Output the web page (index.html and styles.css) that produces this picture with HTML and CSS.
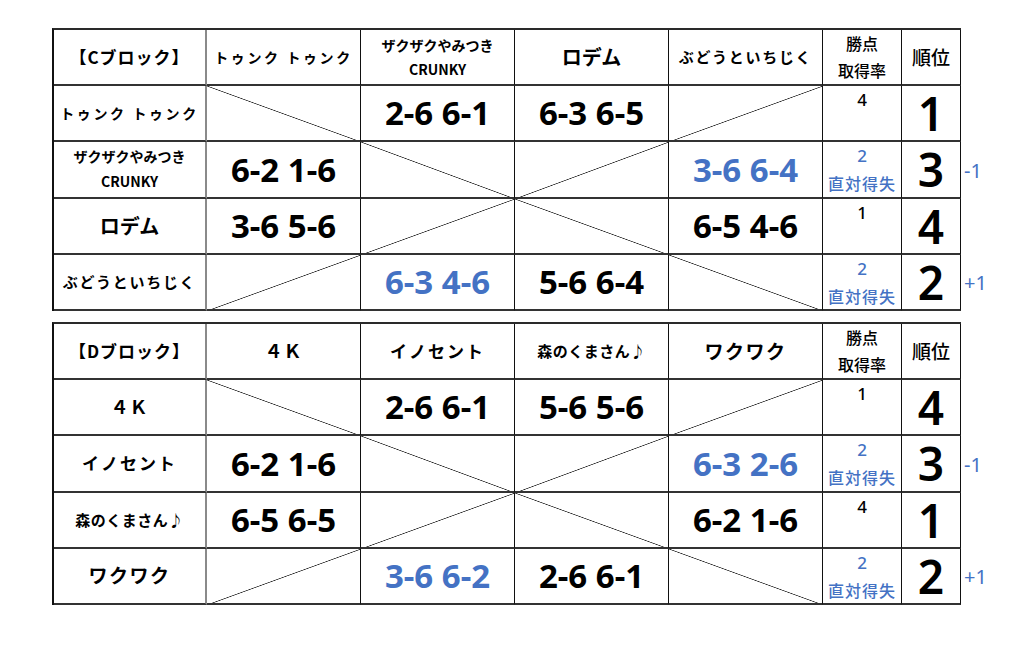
FILE: index.html
```html
<!DOCTYPE html>
<html lang="ja">
<head>
<meta charset="utf-8">
<title>ブロック対戦表</title>
<link rel="stylesheet" href="styles.css">
</head>
<body>
<main class="page">

  <section class="block">
    <div class="table">
      <div class="cell c1 name-blk">【Cブロック】</div>
      <div class="cell name-md">トゥンク トゥンク</div>
      <div class="cell name-2l"><span>ザクザクやみつき</span><span>CRUNKY</span></div>
      <div class="cell name-lg">ロデム</div>
      <div class="cell name-bd">ぶどうといちじく</div>
      <div class="cell head-2l"><span>勝点</span><span>取得率</span></div>
      <div class="cell head-rank">順位</div>

      <div class="cell c1 name-md">トゥンク トゥンク</div>
      <div class="cell diag-down"></div>
      <div class="cell score">2-6 6-1</div>
      <div class="cell score">6-3 6-5</div>
      <div class="cell diag-up"></div>
      <div class="cell pts"><span class="pt-num">4</span></div>
      <div class="cell rank">1</div>

      <div class="cell c1 name-2l row"><span>ザクザクやみつき</span><span>CRUNKY</span></div>
      <div class="cell score">6-2 1-6</div>
      <div class="cell diag-down"></div>
      <div class="cell diag-up"></div>
      <div class="cell score blue">3-6 6-4</div>
      <div class="cell pts blue"><span class="pt-num">2</span><span class="pt-note">直対得失</span></div>
      <div class="cell rank">3</div>

      <div class="cell c1 name-lg">ロデム</div>
      <div class="cell score">3-6 5-6</div>
      <div class="cell diag-up"></div>
      <div class="cell diag-down"></div>
      <div class="cell score">6-5 4-6</div>
      <div class="cell pts"><span class="pt-num">1</span></div>
      <div class="cell rank">4</div>

      <div class="cell c1 name-bd">ぶどうといちじく</div>
      <div class="cell diag-up"></div>
      <div class="cell score blue">6-3 4-6</div>
      <div class="cell score">5-6 6-4</div>
      <div class="cell diag-down"></div>
      <div class="cell pts blue"><span class="pt-num">2</span><span class="pt-note">直対得失</span></div>
      <div class="cell rank">2</div>
    </div>
    <div class="notes">
      <div class="note"></div>
      <div class="note"></div>
      <div class="note">-1</div>
      <div class="note"></div>
      <div class="note">+1</div>
    </div>
  </section>

  <section class="block">
    <div class="table">
      <div class="cell c1 name-blk">【Dブロック】</div>
      <div class="cell name-4k">４Ｋ</div>
      <div class="cell name-in">イノセント</div>
      <div class="cell name-mori">森のくまさん♪</div>
      <div class="cell name-wk">ワクワク</div>
      <div class="cell head-2l"><span>勝点</span><span>取得率</span></div>
      <div class="cell head-rank">順位</div>

      <div class="cell c1 name-4k">４Ｋ</div>
      <div class="cell diag-down"></div>
      <div class="cell score">2-6 6-1</div>
      <div class="cell score">5-6 5-6</div>
      <div class="cell diag-up"></div>
      <div class="cell pts"><span class="pt-num">1</span></div>
      <div class="cell rank">4</div>

      <div class="cell c1 name-in">イノセント</div>
      <div class="cell score">6-2 1-6</div>
      <div class="cell diag-down"></div>
      <div class="cell diag-up"></div>
      <div class="cell score blue">6-3 2-6</div>
      <div class="cell pts blue"><span class="pt-num">2</span><span class="pt-note">直対得失</span></div>
      <div class="cell rank">3</div>

      <div class="cell c1 name-mori">森のくまさん♪</div>
      <div class="cell score">6-5 6-5</div>
      <div class="cell diag-up"></div>
      <div class="cell diag-down"></div>
      <div class="cell score">6-2 1-6</div>
      <div class="cell pts"><span class="pt-num">4</span></div>
      <div class="cell rank">1</div>

      <div class="cell c1 name-wk">ワクワク</div>
      <div class="cell diag-up"></div>
      <div class="cell score blue">3-6 6-2</div>
      <div class="cell score">2-6 6-1</div>
      <div class="cell diag-down"></div>
      <div class="cell pts blue"><span class="pt-num">2</span><span class="pt-note">直対得失</span></div>
      <div class="cell rank">2</div>
    </div>
    <div class="notes">
      <div class="note"></div>
      <div class="note"></div>
      <div class="note">-1</div>
      <div class="note"></div>
      <div class="note">+1</div>
    </div>
  </section>

</main>
</body>
</html>
```

FILE: styles.css
```css
* { box-sizing: border-box; }

html, body {
  margin: 0;
  padding: 0;
  background: #ffffff;
}

body {
  font-family: "Noto Sans CJK JP", "Noto Sans", sans-serif;
  color: #000000;
}

.page {
  display: flex;
  flex-direction: column;
  gap: 11px;
  padding: 28px 0 0 52px;
}

.block {
  display: flex;
  align-items: flex-start;
}

.table {
  display: grid;
  grid-template-columns: 153px 154px 154px 154px 154px 79px 59px;
  grid-template-rows: repeat(5, 56.2px);
  border-left: 2px solid #111;
  border-top: 2px solid #2a2a2a;
}

.cell {
  border-right: 1px solid #111;
  border-bottom: 2px solid #333;
  display: flex;
  flex-direction: column;
  align-items: center;
  justify-content: center;
  text-align: center;
  font-weight: 700;
  line-height: 1.2;
  white-space: nowrap;
  background-origin: border-box;
}

.c1 {
  border-right: 2px solid #8a8a8a;
}

.name-blk { font-size: 17px; letter-spacing: 1px; }
.name-md { font-size: 14px; letter-spacing: 2.6px; }
.name-lg { font-size: 20px; }
.name-bd { font-size: 15px; letter-spacing: 1.7px; }
.name-4k { font-size: 18px; letter-spacing: 1px; }
.name-in { font-size: 17px; letter-spacing: 2px; }
.name-mori { font-size: 15px; letter-spacing: 0.5px; }
.name-wk { font-size: 19px; letter-spacing: 1.5px; }

.name-2l { font-size: 14px; line-height: 24px; }
.name-2l.row { line-height: 25px; }

.head-2l {
  font-size: 16px;
  font-weight: 500;
  line-height: 27px;
}

.head-rank {
  font-size: 19px;
  font-weight: 500;
}

.score {
  font-family: "Noto Sans", "Noto Sans CJK JP", sans-serif;
  font-size: 33px;
  font-weight: 700;
}

.blue { color: #4472c4; }

.pts {
  justify-content: flex-start;
  font-weight: 500;
  padding-top: 1px;
}

.pt-num {
  font-family: "Noto Sans", sans-serif;
  font-size: 17px;
  font-weight: 500;
  line-height: 26px;
}

.pt-note {
  font-size: 16px;
  letter-spacing: 1px;
  line-height: 26px;
  margin-top: 1px;
}

.rank {
  font-family: "Noto Sans", sans-serif;
  font-size: 46px;
  font-weight: 600;
  line-height: 50px;
}

.diag-down {
  background-image: linear-gradient(to top right,
    transparent calc(50% - 0.7px),
    #222 50%,
    transparent calc(50% + 0.7px));
}

.diag-up {
  background-image: linear-gradient(to bottom right,
    transparent calc(50% - 0.7px),
    #222 50%,
    transparent calc(50% + 0.7px));
}

.notes {
  display: grid;
  grid-template-rows: repeat(5, 56.2px);
  padding-top: 2px;
  padding-left: 3px;
}

.note {
  display: flex;
  align-items: center;
  font-family: "Noto Sans", sans-serif;
  font-size: 20px;
  color: #4472c4;
}
```
